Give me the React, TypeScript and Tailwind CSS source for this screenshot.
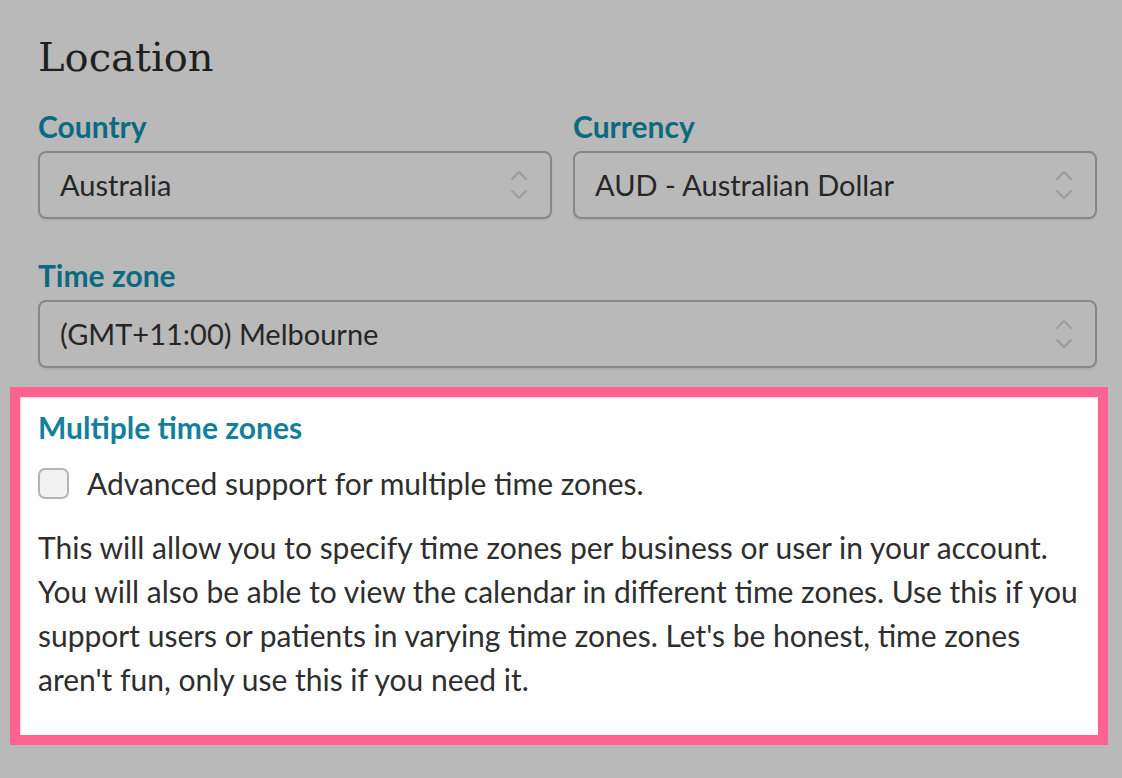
import React from "react";

const sans = "font-['Lato','Open_Sans',sans-serif]";

function Chevrons() {
  return (
    <svg width="18" height="34" viewBox="0 0 18 34" fill="none" stroke="#9c9c9c" strokeWidth="2" strokeLinecap="round" strokeLinejoin="round">
      <path d="M2 11l7-7 7 7" />
      <path d="M2 23l7 7 7-7" />
    </svg>
  );
}

function Select({ value }: { value: string }) {
  return (
    <div className="flex h-[68px] items-center justify-between rounded-[8px] border-2 border-[#878787] pl-[20px] pr-[22px] shadow-[0_2px_2px_rgba(0,0,0,0.06)]">
      <span className="text-[29px] text-[#262626]">{value}</span>
      <Chevrons />
    </div>
  );
}

function Field({ label, value, className = "" }: { label: string; value: string; className?: string }) {
  return (
    <div className={`flex flex-col ${className}`}>
      <label className="mb-[8px] text-[30px] font-bold leading-[34px] text-[#0b6a7f]">{label}</label>
      <Select value={value} />
    </div>
  );
}

export default function App() {
  return (
    <div className={`h-[778px] w-[1122px] overflow-hidden bg-[#b9b9b9] ${sans}`}>
      <div className="pl-[38px] pr-[25px] pt-[30px]">
        <h2 className="font-['DejaVu_Serif',serif] text-[40px] leading-[54px] text-[#1f1f1f]">Location</h2>
        <div className="mt-[25px] flex gap-x-[21px]">
          <Field label="Country" value="Australia" className="w-[514px]" />
          <Field label="Currency" value="AUD - Australian Dollar" className="flex-1" />
        </div>
        <div className="mt-[39px]">
          <Field label="Time zone" value="(GMT+11:00) Melbourne" />
        </div>
      </div>
      <div className="ml-[10px] mt-[19px] w-[1098px] border-[10px] border-[#ff6190]">
        <div className="h-[338px] bg-white pl-[18px] pr-[10px] pt-[12px] shadow-[inset_1px_1px_2px_rgba(0,0,0,0.15)]">
          <h3 className="text-[30px] font-bold leading-[36px] text-[#13809b]">Multiple time zones</h3>
          <label className="mt-[20px] flex items-center gap-[18px]">
            <span className="h-[31px] w-[31px] shrink-0 rounded-[7px] border-2 border-[#b5b5b5] bg-[#f2f2f2]" />
            <span className="text-[30px] leading-[36px] text-[#2e2e2e]">Advanced support for multiple time zones.</span>
          </label>
          <p className="mt-[24px] text-[30px] leading-[44px] text-[#2e2e2e]">
            This will allow you to specify time zones per business or user in your account. You will also be able to view the calendar in different time zones. Use this if you support users or patients in varying time zones. Let's be honest, time zones aren't fun, only use this if you need it.
          </p>
        </div>
      </div>
    </div>
  );
}
